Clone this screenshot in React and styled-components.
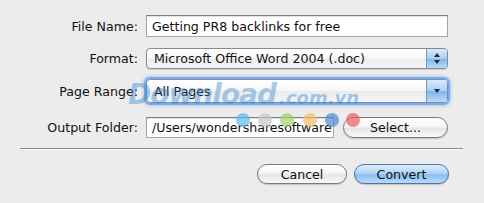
import React from "react";
import styled, { createGlobalStyle } from "styled-components";

const Global = createGlobalStyle`
  html, body { margin: 0; padding: 0; background: #ececec; }
  body { font-family: "DejaVu Sans", "Liberation Sans", sans-serif; }
`;

const Dialog = styled.div`
  position: relative;
  width: 484px;
  height: 203px;
  background: #ececec;
  overflow: hidden;
  padding-top: 15px;
  box-sizing: border-box;
`;

const Row = styled.div`
  display: grid;
  grid-template-columns: 138px auto;
  column-gap: 8px;
  align-items: center;
  height: ${(p) => p.$h}px;
  margin-bottom: ${(p) => p.$mb || 0}px;
`;

const Label = styled.div`
  text-align: right;
  font-size: 12.6px;
  color: #111;
  white-space: nowrap;
`;

const TextField = styled.div`
  box-sizing: border-box;
  width: ${(p) => p.$w}px;
  height: ${(p) => p.$h}px;
  background: #fff;
  border: 1px solid #a5a5a5;
  border-top-color: #7d7d7d;
  box-shadow: inset 0 1px 1px rgba(0, 0, 0, 0.12);
  font-size: 12.6px;
  color: #111;
  padding-left: 5px;
  display: flex;
  align-items: center;
  white-space: nowrap;
  overflow: hidden;
`;

const Popup = styled.div`
  box-sizing: border-box;
  width: 302px;
  height: ${(p) => p.$h}px;
  border: 1px solid #8a8a8a;
  border-radius: 4px;
  display: flex;
  overflow: hidden;
  background: linear-gradient(#ffffff 0%, #f7f7f7 50%, #ebebeb 51%, #f5f5f5 100%);
  box-shadow: ${(p) =>
    p.$focus
      ? "0 0 0 2px rgba(110, 160, 225, 0.75), 0 0 3px 3px rgba(120, 170, 230, 0.5)"
      : "0 1px 1px rgba(0,0,0,0.15)"};
  border-color: ${(p) => (p.$focus ? "#6e8fc0" : "#8a8a8a")};
`;

const PopupText = styled.div`
  flex: 1;
  font-size: 12.6px;
  color: #111;
  padding-left: 7px;
  display: flex;
  align-items: center;
  white-space: nowrap;
`;

const Stepper = styled.div`
  width: 20px;
  border-left: 1px solid #7b94b8;
  background: linear-gradient(#d9ebfb 0%, #a9cdf2 50%, #7fb3ea 51%, #b8dcfb 100%);
  display: flex;
  flex-direction: column;
  align-items: center;
  justify-content: center;
  gap: 3px;
`;

const Tri = styled.div`
  width: 0;
  height: 0;
  border-left: 3px solid transparent;
  border-right: 3px solid transparent;
  ${(p) =>
    p.$up
      ? "border-bottom: 4px solid #1d2a3a;"
      : "border-top: 4px solid #1d2a3a;"}
`;

const FolderLine = styled.div`
  display: flex;
  align-items: center;
  gap: 9px;
`;

const Pill = styled.button`
  box-sizing: border-box;
  width: ${(p) => p.$w}px;
  height: ${(p) => p.$h}px;
  border-radius: 11px;
  font-family: "DejaVu Sans", "Liberation Sans", sans-serif;
  font-size: 12.6px;
  color: #111;
  padding: 0;
  border: 1px solid ${(p) => (p.$primary ? "#51719f" : "#7a7a7a")};
  background: ${(p) =>
    p.$primary
      ? "linear-gradient(#dcecfb 0%, #b3d5f6 45%, #8ac0f0 55%, #b6dcfb 100%)"
      : "linear-gradient(#ffffff 0%, #f6f6f6 45%, #e6e6e6 55%, #f8f8f8 100%)"};
  box-shadow: 0 1px 1px rgba(0, 0, 0, 0.18);
`;

const Separator = styled.div`
  margin: 10px 21px 0 20px;
  height: 1px;
  background: #8e8e8e;
  border-bottom: 1px solid #f7f7f7;
`;

const Buttons = styled.div`
  display: flex;
  gap: 7px;
  padding: 14px 0 0 257px;
`;

const Watermark = styled.div`
  position: absolute;
  left: 128px;
  top: 78px;
  font-family: "DejaVu Sans", sans-serif;
  font-weight: bold;
  font-style: italic;
  color: rgba(60, 140, 210, 0.45);
  white-space: nowrap;
  pointer-events: none;
  display: flex;
  align-items: baseline;
`;

const WmBig = styled.span`
  font-size: 28px;
  letter-spacing: -1px;
`;

const WmSmall = styled.span`
  font-size: 18px;
  margin-left: 3px;
`;

const Dot = styled.div`
  position: absolute;
  top: 113px;
  left: ${(p) => p.$x - 7}px;
  width: 14px;
  height: 14px;
  border-radius: 50%;
  background: ${(p) => p.$c};
  pointer-events: none;
`;

const dots = [
  [243, "rgba(90,185,235,0.7)"],
  [265, "rgba(200,200,200,0.7)"],
  [287, "rgba(160,210,110,0.7)"],
  [310, "rgba(245,190,100,0.7)"],
  [332, "rgba(70,140,210,0.7)"],
  [353, "rgba(235,90,100,0.7)"],
];

export default function App() {
  return (
    <>
      <Global />
      <Dialog>
        <Row $h={22} $mb={11}>
          <Label>File Name:</Label>
          <TextField $w={302} $h={22}>Getting PR8 backlinks for free</TextField>
        </Row>
        <Row $h={21} $mb={10}>
          <Label>Format:</Label>
          <Popup $h={21}>
            <PopupText>Microsoft Office Word 2004 (.doc)</PopupText>
            <Stepper>
              <Tri $up />
              <Tri />
            </Stepper>
          </Popup>
        </Row>
        <Row $h={24} $mb={14}>
          <Label>Page Range:</Label>
          <Popup $h={24} $focus>
            <PopupText>All Pages</PopupText>
            <Stepper>
              <Tri />
            </Stepper>
          </Popup>
        </Row>
        <Row $h={21}>
          <Label>Output Folder:</Label>
          <FolderLine>
            <TextField $w={188} $h={21}>/Users/wondersharesoftware</TextField>
            <Pill $w={105} $h={21}>Select...</Pill>
          </FolderLine>
        </Row>
        <Separator />
        <Buttons>
          <Pill $w={90} $h={20}>Cancel</Pill>
          <Pill $w={95} $h={20} $primary>Convert</Pill>
        </Buttons>
        <Watermark>
          <WmBig>Download</WmBig>
          <WmSmall>.com.vn</WmSmall>
        </Watermark>
        {dots.map(([x, c]) => (
          <Dot key={x} $x={x} $c={c} />
        ))}
      </Dialog>
    </>
  );
}
